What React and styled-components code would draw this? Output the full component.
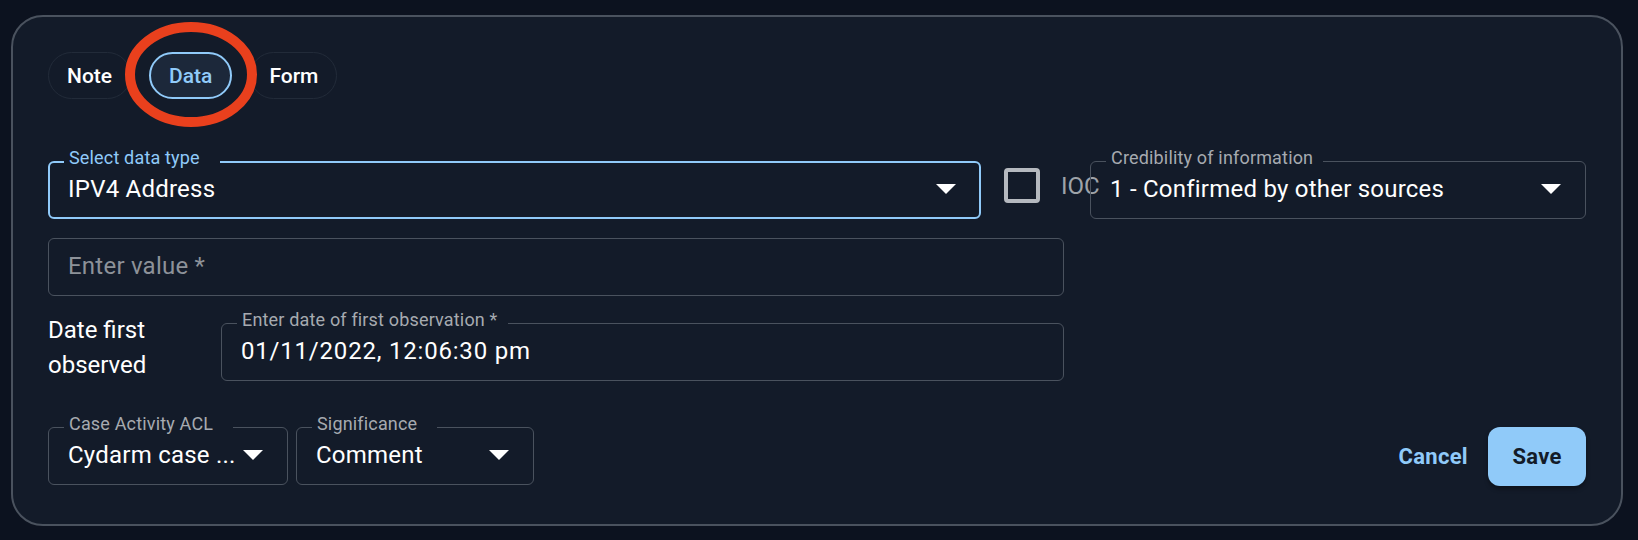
import React from 'react';
import styled, { createGlobalStyle } from 'styled-components';

const GlobalStyle = createGlobalStyle`
  html, body {
    margin: 0;
    background: #0c121f;
  }

  body {
    font-family: Roboto, 'Liberation Sans', sans-serif;
  }
`;

const Page = styled.div`
  padding: 15px 15px 14px 11px;
`;

const Card = styled.div`
  box-sizing: border-box;
  height: 511px;
  padding: 35px 35px 0 35px;
  border: 2px solid #4a525e;
  border-radius: 32px;
  background: #131b29;
  display: flex;
  flex-direction: column;
`;

const TabRow = styled.div`
  position: relative;
  display: flex;
  gap: 18px;
  margin-bottom: 62px;
`;

const Tab = styled.button`
  box-sizing: border-box;
  height: 47px;
  padding: 0 18px;
  border: ${({ $active }) => ($active ? '2px solid #90caf9' : '1px solid #222b39')};
  border-radius: 24px;
  background: ${({ $active }) => ($active ? '#1c283a' : 'transparent')};
  color: ${({ $active }) => ($active ? '#90caf9' : '#ffffff')};
  font-family: inherit;
  font-size: 21px;
  font-weight: 500;
`;

const Circle = styled.svg`
  position: absolute;
  left: 77px;
  top: -30px;
  pointer-events: none;
`;

const Row = styled.div`
  display: flex;
  align-items: flex-start;
  margin-top: ${({ $mt }) => $mt || 0}px;
`;

const Field = styled.div`
  position: relative;
  box-sizing: border-box;
  flex: none;
  width: ${({ $w }) => $w}px;
  height: 58px;
  margin-left: ${({ $ml }) => $ml || 0};
  padding: 0 ${({ $focused }) => ($focused ? 23 : 24)}px 2px ${({ $focused }) => ($focused ? 18 : 19)}px;
  border: ${({ $focused }) => ($focused ? '2px solid #90caf9' : '1px solid #4a525e')};
  border-radius: 6px;
  display: flex;
  align-items: center;
`;

const FieldLabel = styled.span`
  position: absolute;
  left: ${({ $focused }) => ($focused ? 14 : 15)}px;
  top: ${({ $focused }) => ($focused ? -14 : -13)}px;
  padding: 0 ${({ $gap }) => $gap}px 0 5px;
  background: #131b29;
  color: ${({ $focused }) => ($focused ? '#90caf9' : '#a6aab0')};
  font-size: 18px;
  line-height: 18px;
  letter-spacing: 0.17px;
  white-space: nowrap;
`;

const Value = styled.span`
  flex: 1;
  min-width: 0;
  color: ${({ $placeholder }) => ($placeholder ? '#8d9299' : '#ffffff')};
  font-size: 24px;
  letter-spacing: ${({ $spaced }) => ($spaced ? '0.8px' : '0.23px')};
  white-space: nowrap;
`;

const CaretIcon = styled.svg`
  flex: none;
  margin-left: 3px;
`;

const Caret = () => (
  <CaretIcon width="20" height="10" viewBox="0 0 20 10">
    <path d="M0 0h20L10 10z" fill="#ffffff" />
  </CaretIcon>
);

const CheckGroup = styled.div`
  display: flex;
  align-items: center;
  height: 35px;
  margin: 7px 0 0 23px;
`;

const CheckBox = styled.span`
  box-sizing: border-box;
  width: 36px;
  height: 35px;
  border: 4px solid #b5b9bf;
  border-radius: 4px;
`;

const CheckText = styled.span`
  width: 28px;
  margin-left: 21px;
  color: #9ea3a9;
  font-size: 24px;
  white-space: nowrap;
  overflow: visible;
`;

const SideLabel = styled.div`
  box-sizing: border-box;
  flex: none;
  width: 173px;
  margin-top: -10px;
  padding-right: 40px;
  color: #ffffff;
  font-size: 24px;
  font-weight: 400;
  line-height: 35px;
`;

const Actions = styled.div`
  display: flex;
  align-items: center;
  gap: 4px;
  margin-left: auto;
`;

const TextButton = styled.button`
  height: 58px;
  padding: 0 16px;
  border: none;
  background: transparent;
  color: #90caf9;
  font-family: inherit;
  font-size: 22px;
  font-weight: 700;
  letter-spacing: 0.3px;
`;

const SaveButton = styled.button`
  width: 98px;
  height: 59px;
  border: none;
  border-radius: 12px;
  background: #90caf9;
  color: #131b29;
  font-family: inherit;
  font-size: 22px;
  font-weight: 700;
  letter-spacing: 0.3px;
  box-shadow: 0 3px 4px rgba(0, 0, 0, 0.35);
`;

const SelectField = ({ w, label, value, focused, gap = 20, ml, placeholder, spaced, caret }) => (
  <Field $w={w} $focused={focused} $ml={ml}>
    {label && (
      <FieldLabel $focused={focused} $gap={gap}>
        {label}
      </FieldLabel>
    )}
    <Value $placeholder={placeholder} $spaced={spaced}>
      {value}
    </Value>
    {caret && <Caret />}
  </Field>
);

const App = () => (
  <>
    <GlobalStyle />
    <Page>
      <Card>
        <TabRow>
          <Tab>Note</Tab>
          <Tab $active>Data</Tab>
          <Tab>Form</Tab>
          <Circle width="132" height="105" viewBox="0 0 132 105">
            <ellipse cx="66" cy="52.5" rx="61" ry="47.5" fill="none" stroke="#e9401d" strokeWidth="10" />
          </Circle>
        </TabRow>

        <Row>
          <SelectField w={933} focused label="Select data type" value="IPV4 Address" caret />
          <CheckGroup>
            <CheckBox />
            <CheckText>IOC</CheckText>
          </CheckGroup>
          <SelectField
            w={496}
            ml="auto"
            gap={10}
            label="Credibility of information"
            value="1 - Confirmed by other sources"
            caret
          />
        </Row>

        <Row $mt={19}>
          <SelectField w={1016} placeholder value="Enter value *" />
        </Row>

        <Row $mt={27}>
          <SideLabel>Date first observed</SideLabel>
          <SelectField
            w={843}
            gap={10}
            spaced
            label="Enter date of first observation *"
            value="01/11/2022, 12:06:30 pm"
          />
        </Row>

        <Row $mt={44}>
          <SelectField w={240} label="Case Activity ACL" value="Cydarm case ..." caret />
          <SelectField w={238} ml="8px" label="Significance" value="Comment" caret />
          <Actions>
            <TextButton>Cancel</TextButton>
            <SaveButton>Save</SaveButton>
          </Actions>
        </Row>
      </Card>
    </Page>
  </>
);

export default App;
